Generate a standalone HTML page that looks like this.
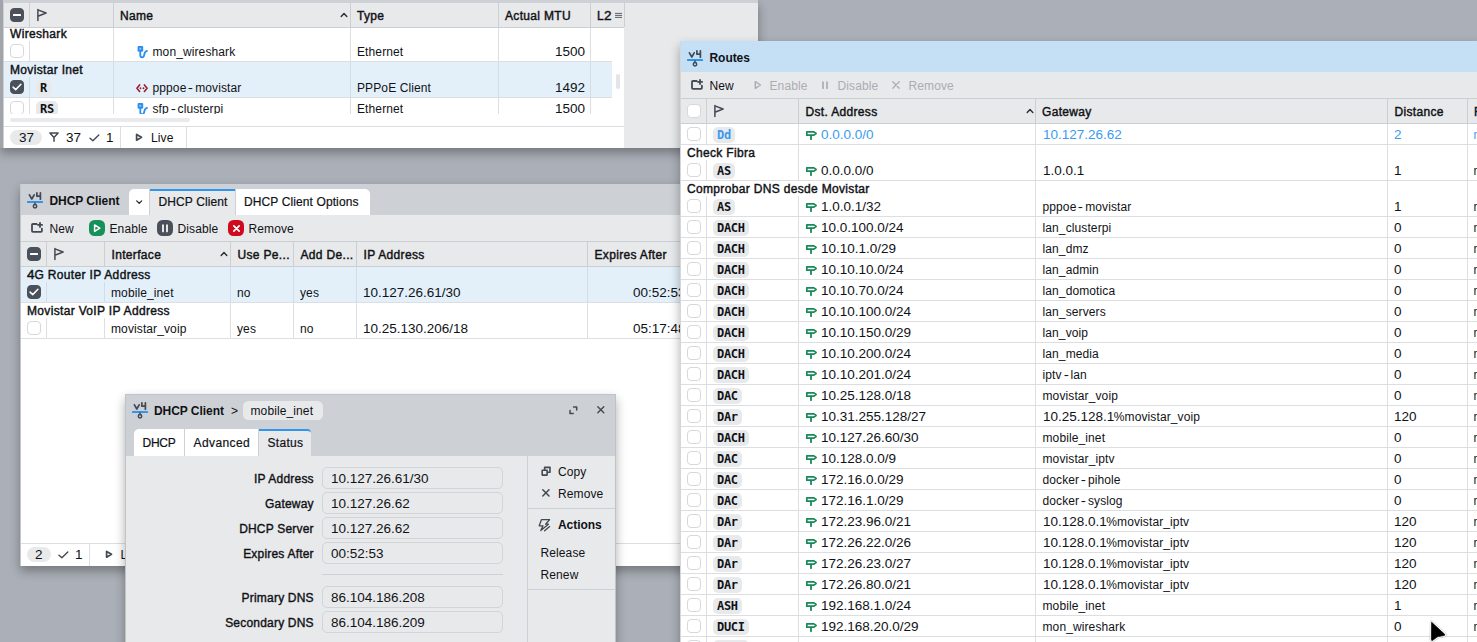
<!DOCTYPE html>
<html lang="en"><head><meta charset="utf-8"><title>WinBox</title><style>
*{box-sizing:border-box;margin:0;padding:0}
html,body{width:1477px;height:642px;overflow:hidden}
body{background:#abafb7;font-family:"Liberation Sans", sans-serif;font-size:12px;color:#101216;position:relative;line-height:14px;letter-spacing:.11px}
.a,.t,.win,.cb,.pill{position:absolute}
.t{white-space:nowrap;line-height:14px;height:14px}
.b{-webkit-text-stroke:.42px currentColor;letter-spacing:.33px}
.m{-webkit-text-stroke:.2px currentColor}
.B{font-weight:bold;letter-spacing:-.05px}
.n{display:inline-block;transform:scaleX(1.125);transform-origin:0 50%;letter-spacing:0}
.h{display:inline-block;width:8.75px;text-align:center;transform:scaleX(1.3)}
.win{overflow:hidden}
.cb{width:14px;height:14px;border-radius:4px;border:1px solid #d6d8dc;background:#fff}
.cb.on{background:#4a515b;border-color:#4a515b}
.pill{background:#e8e9eb;border-radius:5px;font-family:"DejaVu Sans Mono", "Liberation Mono", monospace;font-weight:bold;font-size:12px;line-height:16px;height:16px;padding:0 4px;white-space:nowrap;letter-spacing:-.3px}
.blue{color:#3a9bf0}
.dis{color:#a9adb4}
svg{position:absolute;overflow:visible}
</style></head><body>
<div class="a" style="left:0px;top:0px;width:758px;height:148px;background:#e8e9eb;box-shadow:0 5px 10px rgba(0,0,0,.32)"></div>
<div class="a" style="left:0px;top:0px;width:758px;height:3px;background:#cdd0d4;"></div>
<div class="a" style="left:0px;top:0px;width:3px;height:148px;background:#a1a5aa;"></div>
<div class="a" style="left:3px;top:0px;width:1px;height:148px;background:#cdd0d4;"></div>
<div class="a" style="left:4px;top:3px;width:620px;height:145px;background:#fff;"></div>
<div class="a" style="left:4px;top:3px;width:620px;height:24px;background:#e8e9eb;"></div>
<div class="a" style="left:4px;top:27px;width:620px;height:1px;background:#cbced2;"></div>
<div class="a" style="left:29px;top:3px;width:1px;height:24px;background:#cbced2;"></div>
<div class="a" style="left:113px;top:3px;width:1px;height:24px;background:#cbced2;"></div>
<div class="a" style="left:350px;top:3px;width:1px;height:24px;background:#cbced2;"></div>
<div class="a" style="left:498px;top:3px;width:1px;height:24px;background:#cbced2;"></div>
<div class="a" style="left:590px;top:3px;width:1px;height:24px;background:#cbced2;"></div>
<div class="cb on" style="left:10px;top:8px"><div class="a" style="left:2px;top:5px;width:8px;height:2px;background:#fff;border-radius:.5px"></div></div>
<svg style="left:36px;top:9px" width="12" height="12" viewBox="0 0 12 12"><path d="M1.9 0.6 V11.6 M1.9 0.9 L10.1 4 L1.9 7.2" fill="none" stroke="#434a54" stroke-width="1.5" stroke-linecap="round" stroke-linejoin="round"/></svg>
<div class="t b" style="left:120px;top:9px;">Name</div>
<svg style="left:340px;top:12px" width="8" height="6" viewBox="0 0 8 6"><path d="M1.2 4.5 L4 1.6 L6.8 4.5" fill="none" stroke="#2a2d33" stroke-width="1.4" stroke-linecap="round" stroke-linejoin="round"/></svg>
<div class="t b" style="left:357px;top:9px;">Type</div>
<div class="t b" style="left:505px;top:9px;">Actual MTU</div>
<div class="t b" style="left:597px;top:9px;">L<span class="n" style="margin-right:0.83px">2</span></div>
<svg style="left:614.5px;top:11px" width="8" height="9" viewBox="0 0 8 9"><path d="M0 2.4 H7 M0 4.4 H7 M0 6.4 H7" stroke="#5a5e66" stroke-width="1"/></svg>
<div class="a" style="left:624px;top:3px;width:1px;height:24px;background:#cbced2;"></div>
<div class="a" style="left:113px;top:28px;width:1px;height:86px;background:#dcdee1;"></div>
<div class="a" style="left:350px;top:28px;width:1px;height:86px;background:#dcdee1;"></div>
<div class="a" style="left:498px;top:28px;width:1px;height:86px;background:#dcdee1;"></div>
<div class="a" style="left:590px;top:28px;width:1px;height:86px;background:#dcdee1;"></div>
<div class="t b" style="left:10px;top:27px;">Wireshark</div>
<div class="cb" style="left:10px;top:44px"></div>
<div class="a" style="left:29px;top:41px;width:1px;height:20px;background:#dcdee1;"></div>
<svg style="left:137px;top:45px" width="11" height="13" viewBox="0 0 11 13"><rect x="0.6" y="0.9" width="5.6" height="5.9" rx="1.2" fill="#2a8ff0"/><rect x="2.4" y="2.9" width="1.8" height="1.7" fill="#9ccaf8"/><path d="M3.3 6.8 V10.3 Q3.3 12.3 5.1 12.3 Q7 12.3 7.2 10 Q7.5 6.6 10 5.9" fill="none" stroke="#2a8ff0" stroke-width="1.8" stroke-linecap="round" stroke-linejoin="round"/></svg>
<div class="t " style="left:152.5px;top:45px;">mon_wireshark</div>
<div class="t " style="left:357px;top:45px;">Ethernet</div>
<div class="t " style="left:505px;top:45px;width:80px;text-align:right"><span class="n" style="margin-right:3.34px">1500</span></div>
<div class="a" style="left:4px;top:61px;width:608px;height:1px;background:#dcdee1;"></div>
<div class="a" style="left:4px;top:62px;width:608px;height:35px;background:#e3f0fa;"></div>
<div class="a" style="left:113px;top:62px;width:1px;height:35px;background:#d2dde7;"></div>
<div class="a" style="left:350px;top:62px;width:1px;height:35px;background:#d2dde7;"></div>
<div class="a" style="left:498px;top:62px;width:1px;height:35px;background:#d2dde7;"></div>
<div class="a" style="left:590px;top:62px;width:1px;height:35px;background:#d2dde7;"></div>
<div class="t b" style="left:10px;top:63px;">Movistar Inet</div>
<div class="cb on" style="left:10px;top:80px"><svg width="12" height="12" viewBox="0 0 12 12" style="left:0;top:0"><path d="M2.1 6.1 L4.7 8.6 L9.9 3.3" fill="none" stroke="#fff" stroke-width="1.5" stroke-linecap="round" stroke-linejoin="round"/></svg></div>
<div class="a" style="left:29px;top:77px;width:1px;height:20px;background:#d2dde7;"></div>
<div class="pill " style="left:36px;top:80px">R</div>
<svg style="left:136px;top:83.5px" width="12" height="9" viewBox="0 0 12 9"><path d="M3.6 0.9 L0.9 4.2 L3.6 7.5 M8.4 0.9 L11.1 4.2 L8.4 7.5" fill="none" stroke="#9b1c2c" stroke-width="1.6" stroke-linecap="round" stroke-linejoin="round"/><circle cx="4.5" cy="4.2" r=".95" fill="#9b1c2c"/><circle cx="7.5" cy="4.2" r=".95" fill="#9b1c2c"/></svg>
<div class="t " style="left:152.5px;top:81px;">pppoe<span class="h">-</span>movistar</div>
<div class="t " style="left:357px;top:81px;">PPPoE Client</div>
<div class="t " style="left:505px;top:81px;width:80px;text-align:right"><span class="n" style="margin-right:3.34px">1492</span></div>
<div class="a" style="left:4px;top:97px;width:608px;height:1px;background:#dcdee1;"></div>
<div class="cb" style="left:10px;top:101px"></div>
<div class="a" style="left:29px;top:98px;width:1px;height:16px;background:#dcdee1;"></div>
<div class="pill " style="left:36px;top:101px">RS</div>
<svg style="left:137px;top:102px" width="11" height="13" viewBox="0 0 11 13"><rect x="0.6" y="0.9" width="5.6" height="5.9" rx="1.2" fill="#2a8ff0"/><rect x="2.4" y="2.9" width="1.8" height="1.7" fill="#9ccaf8"/><path d="M3.3 6.8 V10.3 Q3.3 12.3 5.1 12.3 Q7 12.3 7.2 10 Q7.5 6.6 10 5.9" fill="none" stroke="#2a8ff0" stroke-width="1.8" stroke-linecap="round" stroke-linejoin="round"/></svg>
<div class="t " style="left:152.5px;top:102px;">sfp<span class="h">-</span>clusterpi</div>
<div class="t " style="left:357px;top:102px;">Ethernet</div>
<div class="t " style="left:505px;top:102px;width:80px;text-align:right"><span class="n" style="margin-right:3.34px">1500</span></div>
<div class="a" style="left:4px;top:114px;width:620px;height:12px;background:#fff;"></div>
<div class="a" style="left:616px;top:74px;width:4px;height:15px;background:#e4e5e8;border-radius:2px"></div>
<div class="a" style="left:10px;top:118px;width:180px;height:4px;background:#e9eaec;border-radius:2px"></div>
<div class="a" style="left:4px;top:126px;width:620px;height:1px;background:#dcdee1;"></div>
<div class="a" style="left:10px;top:130px;width:32px;height:15px;background:#e8e9eb;border-radius:7.5px"></div>
<div class="t " style="left:19px;top:131px;"><span class="n" style="margin-right:1.67px">37</span></div>
<svg style="left:49px;top:132px" width="10" height="11" viewBox="0 0 10 11"><path d="M0.9 1.1 H9.1 L5 5.5 Z M5 5.5 V9.3" fill="none" stroke="#434a54" stroke-width="1.5" stroke-linecap="round" stroke-linejoin="round"/></svg>
<div class="t " style="left:66px;top:131px;"><span class="n" style="margin-right:1.67px">37</span></div>
<svg style="left:89px;top:134px" width="11" height="8" viewBox="0 0 11 8"><path d="M1 4.2 L3.9 6.8 L9.8 1" fill="none" stroke="#434a54" stroke-width="1.4" stroke-linecap="round" stroke-linejoin="round"/></svg>
<div class="t " style="left:106px;top:131px;"><span class="n" style="margin-right:0.83px">1</span></div>
<div class="a" style="left:120px;top:127px;width:1px;height:21px;background:#dcdee1;"></div>
<svg style="left:135px;top:133.2px" width="8" height="9" viewBox="0 0 8 9"><path d="M1.6 1.4 L6.5 4.3 L1.6 7.2 Z" fill="none" stroke="#434a54" stroke-width="1.7" stroke-linecap="round" stroke-linejoin="round"/></svg>
<div class="t " style="left:151px;top:131px;">Live</div>
<div class="a" style="left:186px;top:127px;width:1px;height:21px;background:#dcdee1;"></div>
<div class="win" style="left:20px;top:184px;width:700px;height:382px;background:#fff;box-shadow:0 5px 10px rgba(0,0,0,.32);border-left:1px solid #c2c5ca">
<div class="a" style="left:0px;top:0px;width:700px;height:31px;background:#cdd0d4;"></div>
<svg style="left:6px;top:8px" width="16" height="17" viewBox="0 0 16 17"><path d="M2.4 2.8 L4.8 7 L7.2 2.8" fill="none" stroke="#434a54" stroke-width="1.7" stroke-linecap="round" stroke-linejoin="round"/><path d="M9.9 0.8 V4.2 H13.2 M13.4 0.8 V7.2" fill="none" stroke="#434a54" stroke-width="1.7" stroke-linecap="round" stroke-linejoin="round"/><rect x="0" y="9" width="16" height="2" rx=".6" fill="#2f95ef"/><path d="M8 11 V12.6" fill="none" stroke="#434a54" stroke-width="1.5" stroke-linecap="round" stroke-linejoin="round"/><circle cx="8" cy="14.3" r="1.7" fill="none" stroke="#434a54" stroke-width="1.5"/></svg>
<div class="t B" style="left:28.5px;top:10px;">DHCP Client</div>
<div class="a" style="left:108px;top:5px;width:20px;height:26px;background:#fff;border-radius:5px 0 0 0"></div>
<svg style="left:114px;top:15px" width="8" height="6" viewBox="0 0 8 6"><path d="M1.7 1.9 L4.2 4.3 L6.7 1.9" fill="none" stroke="#2a2d33" stroke-width="1.3" stroke-linecap="round" stroke-linejoin="round"/></svg>
<div class="a" style="left:129px;top:5px;width:85px;height:26px;background:#e8e9eb;border-top:2px solid #2f95ef"></div>
<div class="t m" style="left:137.5px;top:11px;">DHCP Client</div>
<div class="a" style="left:215px;top:5px;width:134px;height:26px;background:#fff;border-radius:0 5px 0 0"></div>
<div class="t m" style="left:223px;top:11px;">DHCP Client Options</div>
<div class="a" style="left:0px;top:31px;width:700px;height:26px;background:#e8e9eb;"></div>
<svg style="left:9.5px;top:38px" width="13" height="12" viewBox="0 0 13 12"><path d="M5.6 2 H1.9 Q1 2 1 2.9 V9 Q1 9.9 1.9 9.9 H10 Q10.9 9.9 10.9 9 V6.6" fill="none" stroke="#434a54" stroke-width="1.8" stroke-linecap="round" stroke-linejoin="round"/><path d="M9 0.8 V5 M6.9 2.9 H11.1" fill="none" stroke="#434a54" stroke-width="1.8" stroke-linecap="round" stroke-linejoin="round"/></svg>
<div class="t " style="left:28.5px;top:38px;">New</div>
<div class="a" style="left:68px;top:36px;width:16px;height:16px;background:#17905a;border-radius:5.5px"></div>
<svg style="left:72px;top:39px" width="8" height="10" viewBox="0 0 8 10"><path d="M1.6 2 L6.8 5.2 L1.6 8.4 Z" fill="none" stroke="#fff" stroke-width="1.5" stroke-linecap="round" stroke-linejoin="round"/></svg>
<div class="t " style="left:88.5px;top:38px;">Enable</div>
<div class="a" style="left:136px;top:36px;width:16px;height:16px;background:#4a515b;border-radius:5.5px"></div>
<svg style="left:140px;top:39px" width="8" height="10" viewBox="0 0 8 10"><path d="M2 2 V8.4 M6 2 V8.4" fill="none" stroke="#fff" stroke-width="1.7" stroke-linecap="round" stroke-linejoin="round"/></svg>
<div class="t " style="left:156.5px;top:38px;">Disable</div>
<div class="a" style="left:207px;top:36px;width:16px;height:16px;background:#d00a1e;border-radius:5.5px"></div>
<svg style="left:211.5px;top:40.5px" width="7" height="7" viewBox="0 0 7 7"><path d="M0.8 0.8 L6.2 6.2 M6.2 0.8 L0.8 6.2" fill="none" stroke="#fff" stroke-width="1.7" stroke-linecap="round" stroke-linejoin="round"/></svg>
<div class="t " style="left:227.5px;top:38px;">Remove</div>
<div class="a" style="left:0px;top:57px;width:700px;height:1px;background:#cbced2;"></div>
<div class="a" style="left:0px;top:58px;width:700px;height:24px;background:#e8e9eb;"></div>
<div class="a" style="left:0px;top:82px;width:700px;height:1px;background:#cbced2;"></div>
<div class="a" style="left:25px;top:58px;width:1px;height:24px;background:#cbced2;"></div>
<div class="a" style="left:83px;top:58px;width:1px;height:24px;background:#cbced2;"></div>
<div class="a" style="left:209px;top:58px;width:1px;height:24px;background:#cbced2;"></div>
<div class="a" style="left:272px;top:58px;width:1px;height:24px;background:#cbced2;"></div>
<div class="a" style="left:335px;top:58px;width:1px;height:24px;background:#cbced2;"></div>
<div class="a" style="left:566px;top:58px;width:1px;height:24px;background:#cbced2;"></div>
<div class="cb on" style="left:6px;top:63px"><div class="a" style="left:2px;top:5px;width:8px;height:2px;background:#fff;border-radius:.5px"></div></div>
<svg style="left:32px;top:64px" width="12" height="12" viewBox="0 0 12 12"><path d="M1.9 0.6 V11.6 M1.9 0.9 L10.1 4 L1.9 7.2" fill="none" stroke="#434a54" stroke-width="1.5" stroke-linecap="round" stroke-linejoin="round"/></svg>
<div class="t b" style="left:90.5px;top:64px;">Interface</div>
<svg style="left:199px;top:67px" width="8" height="6" viewBox="0 0 8 6"><path d="M1.2 4.5 L4 1.6 L6.8 4.5" fill="none" stroke="#2a2d33" stroke-width="1.4" stroke-linecap="round" stroke-linejoin="round"/></svg>
<div class="t b" style="left:216.5px;top:64px;">Use Pe...</div>
<div class="t b" style="left:279.5px;top:64px;">Add De...</div>
<div class="t b" style="left:342.5px;top:64px;">IP Address</div>
<div class="t b" style="left:573.5px;top:64px;">Expires After</div>
<div class="a" style="left:0px;top:83px;width:700px;height:35px;background:#e3f0fa;"></div>
<div class="a" style="left:0px;top:118px;width:700px;height:1px;background:#dcdee1;"></div>
<div class="a" style="left:0px;top:154px;width:700px;height:1px;background:#dcdee1;"></div>
<div class="a" style="left:209px;top:83px;width:1px;height:35px;background:#d2dde7;"></div>
<div class="a" style="left:209px;top:119px;width:1px;height:35px;background:#dcdee1;"></div>
<div class="a" style="left:272px;top:83px;width:1px;height:35px;background:#d2dde7;"></div>
<div class="a" style="left:272px;top:119px;width:1px;height:35px;background:#dcdee1;"></div>
<div class="a" style="left:335px;top:83px;width:1px;height:35px;background:#d2dde7;"></div>
<div class="a" style="left:335px;top:119px;width:1px;height:35px;background:#dcdee1;"></div>
<div class="a" style="left:566px;top:83px;width:1px;height:35px;background:#d2dde7;"></div>
<div class="a" style="left:566px;top:119px;width:1px;height:35px;background:#dcdee1;"></div>
<div class="a" style="left:25px;top:98px;width:1px;height:20px;background:#d2dde7;"></div>
<div class="a" style="left:25px;top:134px;width:1px;height:20px;background:#dcdee1;"></div>
<div class="a" style="left:83px;top:98px;width:1px;height:20px;background:#d2dde7;"></div>
<div class="a" style="left:83px;top:134px;width:1px;height:20px;background:#dcdee1;"></div>
<div class="t b" style="left:6px;top:84px;"><span class="n" style="margin-right:0.83px">4</span>G Router IP Address</div>
<div class="cb on" style="left:6px;top:101px"><svg width="12" height="12" viewBox="0 0 12 12" style="left:0;top:0"><path d="M2.1 6.1 L4.7 8.6 L9.9 3.3" fill="none" stroke="#fff" stroke-width="1.5" stroke-linecap="round" stroke-linejoin="round"/></svg></div>
<div class="t " style="left:90px;top:102px;">mobile_inet</div>
<div class="t " style="left:216px;top:102px;">no</div>
<div class="t " style="left:279px;top:102px;">yes</div>
<div class="t " style="left:342px;top:102px;"><span class="n" style="margin-right:10.84px">10.127.26.61/30</span></div>
<div class="t " style="left:612px;top:102px;"><span class="n" style="margin-right:5.84px">00:52:53</span></div>
<div class="t b" style="left:6px;top:120px;">Movistar VoIP IP Address</div>
<div class="cb" style="left:6px;top:137px"></div>
<div class="t " style="left:90px;top:138px;">movistar_voip</div>
<div class="t " style="left:216px;top:138px;">yes</div>
<div class="t " style="left:279px;top:138px;">no</div>
<div class="t " style="left:342px;top:138px;"><span class="n" style="margin-right:11.68px">10.25.130.206/18</span></div>
<div class="t " style="left:612px;top:138px;"><span class="n" style="margin-right:5.84px">05:17:48</span></div>
<div class="a" style="left:0px;top:359px;width:700px;height:1px;background:#dcdee1;"></div>
<div class="a" style="left:6px;top:363px;width:24px;height:14.5px;background:#e8e9eb;border-radius:7.5px"></div>
<div class="t " style="left:14px;top:364px;"><span class="n" style="margin-right:0.83px">2</span></div>
<svg style="left:36.5px;top:366.5px" width="11" height="8" viewBox="0 0 11 8"><path d="M1 4.2 L3.9 6.8 L9.8 1" fill="none" stroke="#434a54" stroke-width="1.4" stroke-linecap="round" stroke-linejoin="round"/></svg>
<div class="t " style="left:54px;top:364px;"><span class="n" style="margin-right:0.83px">1</span></div>
<div class="a" style="left:68px;top:360px;width:1px;height:22px;background:#dcdee1;"></div>
<svg style="left:83.5px;top:366px" width="8" height="9" viewBox="0 0 8 9"><path d="M1.6 1.4 L6.5 4.3 L1.6 7.2 Z" fill="none" stroke="#434a54" stroke-width="1.7" stroke-linecap="round" stroke-linejoin="round"/></svg>
<div class="t " style="left:99.5px;top:364px;">Live</div>
</div>
<div class="win" style="left:125px;top:394px;width:491px;height:260px;background:#e8e9eb;box-shadow:0 5px 10px rgba(0,0,0,.32);border:1px solid #bfc3c8">
<div class="a" style="left:-1px;top:-1px;width:492px;height:62px;background:#cdd0d4;"></div>
<svg style="left:6px;top:7px" width="16" height="17" viewBox="0 0 16 17"><path d="M2.4 2.8 L4.8 7 L7.2 2.8" fill="none" stroke="#434a54" stroke-width="1.7" stroke-linecap="round" stroke-linejoin="round"/><path d="M9.9 0.8 V4.2 H13.2 M13.4 0.8 V7.2" fill="none" stroke="#434a54" stroke-width="1.7" stroke-linecap="round" stroke-linejoin="round"/><rect x="0" y="9" width="16" height="2" rx=".6" fill="#2f95ef"/><path d="M8 11 V12.6" fill="none" stroke="#434a54" stroke-width="1.5" stroke-linecap="round" stroke-linejoin="round"/><circle cx="8" cy="14.3" r="1.7" fill="none" stroke="#434a54" stroke-width="1.5"/></svg>
<div class="t B" style="left:28px;top:9px;">DHCP Client</div>
<div class="t " style="left:105px;top:9px;">&gt;</div>
<div class="a" style="left:116.5px;top:6px;width:80.5px;height:19px;background:#e8e9eb;border-radius:5.5px"></div>
<div class="t " style="left:124.5px;top:9px;">mobile_inet</div>
<svg style="left:443px;top:11px" width="9" height="9" viewBox="0 0 9 9"><path d="M4.6 0.9 H7.7 V4" fill="none" stroke="#434a54" stroke-width="1.5" stroke-linecap="round" stroke-linejoin="round"/><path d="M1 4.6 V7.6 H4.2" fill="none" stroke="#434a54" stroke-width="1.5" stroke-linecap="round" stroke-linejoin="round"/></svg>
<svg style="left:470.5px;top:11.3px" width="7.6" height="7.6" viewBox="0 0 7.6 7.6"><path d="M0.8 0.8 L6.8 6.8 M6.8 0.8 L0.8 6.8" fill="none" stroke="#434a54" stroke-width="1.4" stroke-linecap="round" stroke-linejoin="round"/></svg>
<div class="a" style="left:8px;top:34px;width:50px;height:27px;background:#fff;border-radius:5px 0 0 0"></div>
<div class="t m" style="left:16.5px;top:41px;letter-spacing:-.25px">DHCP</div>
<div class="a" style="left:59px;top:34px;width:73px;height:27px;background:#fff;"></div>
<div class="t m" style="left:67.5px;top:41px;letter-spacing:.4px">Advanced</div>
<div class="a" style="left:132.5px;top:34px;width:52.5px;height:27px;background:#e8e9eb;border-top:2px solid #2f95ef;border-radius:0 4px 0 0"></div>
<div class="t m" style="left:141.5px;top:41px;letter-spacing:.3px">Status</div>
<div class="t b" style="left:7px;top:77px;width:180.8px;text-align:right;letter-spacing:.2px;-webkit-text-stroke-width:.38px">IP Address</div>
<div class="a" style="left:196px;top:72px;width:181px;height:22px;border:1px solid #d2d4d8;border-radius:5px"></div>
<div class="t " style="left:204.5px;top:77px;"><span class="n" style="margin-right:10.84px">10.127.26.61/30</span></div>
<div class="t b" style="left:7px;top:102px;width:180.8px;text-align:right;letter-spacing:.2px;-webkit-text-stroke-width:.38px">Gateway</div>
<div class="a" style="left:196px;top:97px;width:181px;height:22px;border:1px solid #d2d4d8;border-radius:5px"></div>
<div class="t " style="left:204.5px;top:102px;"><span class="n" style="margin-right:8.76px">10.127.26.62</span></div>
<div class="t b" style="left:7px;top:127px;width:180.8px;text-align:right;letter-spacing:.2px;-webkit-text-stroke-width:.38px">DHCP Server</div>
<div class="a" style="left:196px;top:122px;width:181px;height:22px;border:1px solid #d2d4d8;border-radius:5px"></div>
<div class="t " style="left:204.5px;top:127px;"><span class="n" style="margin-right:8.76px">10.127.26.62</span></div>
<div class="t b" style="left:7px;top:152px;width:180.8px;text-align:right;letter-spacing:.2px;-webkit-text-stroke-width:.38px">Expires After</div>
<div class="a" style="left:196px;top:147px;width:181px;height:22px;border:1px solid #d2d4d8;border-radius:5px"></div>
<div class="t " style="left:204.5px;top:152px;"><span class="n" style="margin-right:5.84px">00:52:53</span></div>
<div class="a" style="left:196px;top:179px;width:181px;height:1px;background:#cdd0d4;"></div>
<div class="t b" style="left:7px;top:196px;width:180.8px;text-align:right;letter-spacing:.2px;-webkit-text-stroke-width:.38px">Primary DNS</div>
<div class="a" style="left:196px;top:191px;width:181px;height:22px;border:1px solid #d2d4d8;border-radius:5px"></div>
<div class="t " style="left:204.5px;top:196px;"><span class="n" style="margin-right:10.43px">86.104.186.208</span></div>
<div class="t b" style="left:7px;top:221px;width:180.8px;text-align:right;letter-spacing:.2px;-webkit-text-stroke-width:.38px">Secondary DNS</div>
<div class="a" style="left:196px;top:216px;width:181px;height:22px;border:1px solid #d2d4d8;border-radius:5px"></div>
<div class="t " style="left:204.5px;top:221px;"><span class="n" style="margin-right:10.43px">86.104.186.209</span></div>
<div class="a" style="left:401px;top:61px;width:1px;height:200px;background:#cdd0d4;"></div>
<svg style="left:415px;top:71px" width="11" height="11" viewBox="0 0 11 11"><path d="M3.6 1.4 H9 V6.3 H3.6 Z" fill="none" stroke="#434a54" stroke-width="1.6" stroke-linecap="round" stroke-linejoin="round"/><path d="M1.2 4.3 H6.1 V9.1 H1.2 Z" fill="#e8e9eb" stroke="#434a54" stroke-width="1.6" stroke-linecap="round" stroke-linejoin="round"/></svg>
<div class="t " style="left:432px;top:70px;">Copy</div>
<svg style="left:416px;top:94.2px" width="7.8" height="7.8" viewBox="0 0 7.8 7.8"><path d="M0.8 0.8 L7.0 7.0 M7.0 0.8 L0.8 7.0" fill="none" stroke="#434a54" stroke-width="1.5" stroke-linecap="round" stroke-linejoin="round"/></svg>
<div class="t " style="left:432px;top:92px;">Remove</div>
<div class="a" style="left:402px;top:113px;width:88px;height:1px;background:#cdd0d4;"></div>
<svg style="left:412px;top:123px" width="13" height="14" viewBox="0 0 13 14"><path d="M3.5 1.6 H11.6 L7.6 6.2 H10.4 L2.8 12.6 L5 7.8 H1.2 Z" fill="none" stroke="#434a54" stroke-width="1.3" stroke-linecap="round" stroke-linejoin="round"/><path d="M11.6 8.6 L6.6 12.8" fill="none" stroke="#434a54" stroke-width="1.3" stroke-linecap="round" stroke-linejoin="round"/></svg>
<div class="t B" style="left:432px;top:123px;">Actions</div>
<div class="t " style="left:414.5px;top:151px;">Release</div>
<div class="t " style="left:414.5px;top:173px;">Renew</div>
<div class="a" style="left:402px;top:194px;width:88px;height:1px;background:#cdd0d4;"></div>
</div>
<div class="win" style="left:680px;top:41px;width:800px;height:620px;background:#fff;box-shadow:0 5px 10px rgba(0,0,0,.32);border-left:1px solid #d4d6da">
<div class="a" style="left:-1px;top:0px;width:800px;height:31px;background:#c5dff4;"></div>
<svg style="left:6px;top:9px" width="16" height="17" viewBox="0 0 16 17"><path d="M2.4 2.8 L4.8 7 L7.2 2.8" fill="none" stroke="#434a54" stroke-width="1.7" stroke-linecap="round" stroke-linejoin="round"/><path d="M9.9 0.8 V4.2 H13.2 M13.4 0.8 V7.2" fill="none" stroke="#434a54" stroke-width="1.7" stroke-linecap="round" stroke-linejoin="round"/><rect x="0" y="9" width="16" height="2" rx=".6" fill="#2f95ef"/><path d="M8 11 V12.6" fill="none" stroke="#434a54" stroke-width="1.5" stroke-linecap="round" stroke-linejoin="round"/><circle cx="8" cy="14.3" r="1.7" fill="none" stroke="#434a54" stroke-width="1.5"/></svg>
<div class="t B" style="left:28.5px;top:10px;">Routes</div>
<div class="a" style="left:-1px;top:31px;width:800px;height:26px;background:#e8e9eb;"></div>
<svg style="left:10px;top:38px" width="13" height="12" viewBox="0 0 13 12"><path d="M5.6 2 H1.9 Q1 2 1 2.9 V9 Q1 9.9 1.9 9.9 H10 Q10.9 9.9 10.9 9 V6.6" fill="none" stroke="#434a54" stroke-width="1.8" stroke-linecap="round" stroke-linejoin="round"/><path d="M9 0.8 V5 M6.9 2.9 H11.1" fill="none" stroke="#434a54" stroke-width="1.8" stroke-linecap="round" stroke-linejoin="round"/></svg>
<div class="t " style="left:28.5px;top:38px;">New</div>
<svg style="left:73px;top:39px" width="8" height="10" viewBox="0 0 8 10"><path d="M1.3 1.6 L6.5 5 L1.3 8.4 Z" fill="none" stroke="#a9adb4" stroke-width="1.45" stroke-linecap="round" stroke-linejoin="round"/></svg>
<div class="t dis" style="left:88.5px;top:38px;">Enable</div>
<svg style="left:140px;top:39px" width="8" height="10" viewBox="0 0 8 10"><path d="M2 2 V8.2 M6 2 V8.2" fill="none" stroke="#a9adb4" stroke-width="1.7" stroke-linecap="round" stroke-linejoin="round"/></svg>
<div class="t dis" style="left:156.5px;top:38px;">Disable</div>
<svg style="left:211px;top:40px" width="8" height="8" viewBox="0 0 8 8"><path d="M0.8 0.8 L7.2 7.2 M7.2 0.8 L0.8 7.2" fill="none" stroke="#a9adb4" stroke-width="1.3" stroke-linecap="round" stroke-linejoin="round"/></svg>
<div class="t dis" style="left:227.5px;top:38px;">Remove</div>
<div class="a" style="left:-1px;top:57px;width:800px;height:1px;background:#cbced2;"></div>
<div class="a" style="left:-1px;top:58px;width:800px;height:24px;background:#e8e9eb;"></div>
<div class="a" style="left:-1px;top:82px;width:800px;height:1px;background:#cbced2;"></div>
<div class="a" style="left:25px;top:58px;width:1px;height:24px;background:#cbced2;"></div>
<div class="a" style="left:117px;top:58px;width:1px;height:24px;background:#cbced2;"></div>
<div class="a" style="left:354px;top:58px;width:1px;height:24px;background:#cbced2;"></div>
<div class="a" style="left:706px;top:58px;width:1px;height:24px;background:#cbced2;"></div>
<div class="a" style="left:786px;top:58px;width:1px;height:24px;background:#cbced2;"></div>
<div class="cb" style="left:6px;top:63px"></div>
<svg style="left:31.5px;top:64px" width="12" height="12" viewBox="0 0 12 12"><path d="M1.9 0.6 V11.6 M1.9 0.9 L10.1 4 L1.9 7.2" fill="none" stroke="#434a54" stroke-width="1.5" stroke-linecap="round" stroke-linejoin="round"/></svg>
<div class="t b" style="left:124.5px;top:64px;">Dst. Address</div>
<svg style="left:345px;top:67px" width="8" height="6" viewBox="0 0 8 6"><path d="M1.2 4.5 L4 1.6 L6.8 4.5" fill="none" stroke="#2a2d33" stroke-width="1.4" stroke-linecap="round" stroke-linejoin="round"/></svg>
<div class="t b" style="left:361px;top:64px;">Gateway</div>
<div class="t b" style="left:713.5px;top:64px;">Distance</div>
<div class="t b" style="left:793px;top:64px;">R</div>
<div class="cb" style="left:6px;top:86px"></div>
<div class="a" style="left:25px;top:83px;width:1px;height:20px;background:#dcdee1;"></div>
<div class="a" style="left:117px;top:83px;width:1px;height:20px;background:#dcdee1;"></div>
<div class="a" style="left:354px;top:83px;width:1px;height:20px;background:#dcdee1;"></div>
<div class="a" style="left:706px;top:83px;width:1px;height:20px;background:#dcdee1;"></div>
<div class="a" style="left:786px;top:83px;width:1px;height:20px;background:#dcdee1;"></div>
<div class="pill blue" style="left:32px;top:86px">Dd</div>
<svg style="left:124px;top:89px" width="13" height="11" viewBox="0 0 13 11"><path d="M1.8 1.8 H8.9 L11.1 3.5 L8.9 5.2 H1.8 Z" fill="none" stroke="#17895a" stroke-width="1.7" stroke-linecap="round" stroke-linejoin="round"/><path d="M6 5.6 V9.2" fill="none" stroke="#17895a" stroke-width="1.8" stroke-linecap="round" stroke-linejoin="round"/></svg>
<div class="t blue" style="left:139.5px;top:87px;"><span class="n" style="margin-right:5.84px">0.0.0.0/0</span></div>
<div class="t blue" style="left:361.5px;top:87px;"><span class="n" style="margin-right:8.76px">10.127.26.62</span></div>
<div class="t blue" style="left:713px;top:87px;"><span class="n" style="margin-right:0.83px">2</span></div>
<div class="t blue" style="left:792.5px;top:87px;">main</div>
<div class="a" style="left:-1px;top:103px;width:800px;height:1px;background:#dcdee1;"></div>
<div class="t b" style="left:6px;top:105px;">Check Fibra</div>
<div class="cb" style="left:6px;top:122px"></div>
<div class="a" style="left:25px;top:119px;width:1px;height:20px;background:#dcdee1;"></div>
<div class="a" style="left:117px;top:104px;width:1px;height:35px;background:#dcdee1;"></div>
<div class="a" style="left:354px;top:104px;width:1px;height:35px;background:#dcdee1;"></div>
<div class="a" style="left:706px;top:104px;width:1px;height:35px;background:#dcdee1;"></div>
<div class="a" style="left:786px;top:104px;width:1px;height:35px;background:#dcdee1;"></div>
<div class="pill " style="left:32px;top:122px">AS</div>
<svg style="left:124px;top:125px" width="13" height="11" viewBox="0 0 13 11"><path d="M1.8 1.8 H8.9 L11.1 3.5 L8.9 5.2 H1.8 Z" fill="none" stroke="#17895a" stroke-width="1.7" stroke-linecap="round" stroke-linejoin="round"/><path d="M6 5.6 V9.2" fill="none" stroke="#17895a" stroke-width="1.8" stroke-linecap="round" stroke-linejoin="round"/></svg>
<div class="t " style="left:139.5px;top:123px;"><span class="n" style="margin-right:5.84px">0.0.0.0/0</span></div>
<div class="t " style="left:361.5px;top:123px;"><span class="n" style="margin-right:4.59px">1.0.0.1</span></div>
<div class="t " style="left:713px;top:123px;"><span class="n" style="margin-right:0.83px">1</span></div>
<div class="t " style="left:792.5px;top:123px;">main</div>
<div class="a" style="left:-1px;top:139px;width:800px;height:1px;background:#dcdee1;"></div>
<div class="t b" style="left:6px;top:141px;">Comprobar DNS desde Movistar</div>
<div class="cb" style="left:6px;top:158px"></div>
<div class="a" style="left:25px;top:155px;width:1px;height:20px;background:#dcdee1;"></div>
<div class="a" style="left:117px;top:155px;width:1px;height:20px;background:#dcdee1;"></div>
<div class="a" style="left:354px;top:140px;width:1px;height:35px;background:#dcdee1;"></div>
<div class="a" style="left:706px;top:140px;width:1px;height:35px;background:#dcdee1;"></div>
<div class="a" style="left:786px;top:140px;width:1px;height:35px;background:#dcdee1;"></div>
<div class="pill " style="left:32px;top:158px">AS</div>
<svg style="left:124px;top:161px" width="13" height="11" viewBox="0 0 13 11"><path d="M1.8 1.8 H8.9 L11.1 3.5 L8.9 5.2 H1.8 Z" fill="none" stroke="#17895a" stroke-width="1.7" stroke-linecap="round" stroke-linejoin="round"/><path d="M6 5.6 V9.2" fill="none" stroke="#17895a" stroke-width="1.8" stroke-linecap="round" stroke-linejoin="round"/></svg>
<div class="t " style="left:139.5px;top:159px;"><span class="n" style="margin-right:6.67px">1.0.0.1/32</span></div>
<div class="t " style="left:361.5px;top:159px;">pppoe<span class="h">-</span>movistar</div>
<div class="t " style="left:713px;top:159px;"><span class="n" style="margin-right:0.83px">1</span></div>
<div class="t " style="left:792.5px;top:159px;">main</div>
<div class="a" style="left:-1px;top:175px;width:800px;height:1px;background:#dcdee1;"></div>
<div class="cb" style="left:6px;top:179px"></div>
<div class="a" style="left:25px;top:176px;width:1px;height:20px;background:#dcdee1;"></div>
<div class="a" style="left:117px;top:176px;width:1px;height:20px;background:#dcdee1;"></div>
<div class="a" style="left:354px;top:176px;width:1px;height:20px;background:#dcdee1;"></div>
<div class="a" style="left:706px;top:176px;width:1px;height:20px;background:#dcdee1;"></div>
<div class="a" style="left:786px;top:176px;width:1px;height:20px;background:#dcdee1;"></div>
<div class="pill " style="left:32px;top:179px">DACH</div>
<svg style="left:124px;top:182px" width="13" height="11" viewBox="0 0 13 11"><path d="M1.8 1.8 H8.9 L11.1 3.5 L8.9 5.2 H1.8 Z" fill="none" stroke="#17895a" stroke-width="1.7" stroke-linecap="round" stroke-linejoin="round"/><path d="M6 5.6 V9.2" fill="none" stroke="#17895a" stroke-width="1.8" stroke-linecap="round" stroke-linejoin="round"/></svg>
<div class="t " style="left:139.5px;top:180px;"><span class="n" style="margin-right:9.18px">10.0.100.0/24</span></div>
<div class="t " style="left:361.5px;top:180px;">lan_clusterpi</div>
<div class="t " style="left:713px;top:180px;"><span class="n" style="margin-right:0.83px">0</span></div>
<div class="t " style="left:792.5px;top:180px;">main</div>
<div class="a" style="left:-1px;top:196px;width:800px;height:1px;background:#dcdee1;"></div>
<div class="cb" style="left:6px;top:200px"></div>
<div class="a" style="left:25px;top:197px;width:1px;height:20px;background:#dcdee1;"></div>
<div class="a" style="left:117px;top:197px;width:1px;height:20px;background:#dcdee1;"></div>
<div class="a" style="left:354px;top:197px;width:1px;height:20px;background:#dcdee1;"></div>
<div class="a" style="left:706px;top:197px;width:1px;height:20px;background:#dcdee1;"></div>
<div class="a" style="left:786px;top:197px;width:1px;height:20px;background:#dcdee1;"></div>
<div class="pill " style="left:32px;top:200px">DACH</div>
<svg style="left:124px;top:203px" width="13" height="11" viewBox="0 0 13 11"><path d="M1.8 1.8 H8.9 L11.1 3.5 L8.9 5.2 H1.8 Z" fill="none" stroke="#17895a" stroke-width="1.7" stroke-linecap="round" stroke-linejoin="round"/><path d="M6 5.6 V9.2" fill="none" stroke="#17895a" stroke-width="1.8" stroke-linecap="round" stroke-linejoin="round"/></svg>
<div class="t " style="left:139.5px;top:201px;"><span class="n" style="margin-right:8.34px">10.10.1.0/29</span></div>
<div class="t " style="left:361.5px;top:201px;">lan_dmz</div>
<div class="t " style="left:713px;top:201px;"><span class="n" style="margin-right:0.83px">0</span></div>
<div class="t " style="left:792.5px;top:201px;">main</div>
<div class="a" style="left:-1px;top:217px;width:800px;height:1px;background:#dcdee1;"></div>
<div class="cb" style="left:6px;top:221px"></div>
<div class="a" style="left:25px;top:218px;width:1px;height:20px;background:#dcdee1;"></div>
<div class="a" style="left:117px;top:218px;width:1px;height:20px;background:#dcdee1;"></div>
<div class="a" style="left:354px;top:218px;width:1px;height:20px;background:#dcdee1;"></div>
<div class="a" style="left:706px;top:218px;width:1px;height:20px;background:#dcdee1;"></div>
<div class="a" style="left:786px;top:218px;width:1px;height:20px;background:#dcdee1;"></div>
<div class="pill " style="left:32px;top:221px">DACH</div>
<svg style="left:124px;top:224px" width="13" height="11" viewBox="0 0 13 11"><path d="M1.8 1.8 H8.9 L11.1 3.5 L8.9 5.2 H1.8 Z" fill="none" stroke="#17895a" stroke-width="1.7" stroke-linecap="round" stroke-linejoin="round"/><path d="M6 5.6 V9.2" fill="none" stroke="#17895a" stroke-width="1.8" stroke-linecap="round" stroke-linejoin="round"/></svg>
<div class="t " style="left:139.5px;top:222px;"><span class="n" style="margin-right:9.18px">10.10.10.0/24</span></div>
<div class="t " style="left:361.5px;top:222px;">lan_admin</div>
<div class="t " style="left:713px;top:222px;"><span class="n" style="margin-right:0.83px">0</span></div>
<div class="t " style="left:792.5px;top:222px;">main</div>
<div class="a" style="left:-1px;top:238px;width:800px;height:1px;background:#dcdee1;"></div>
<div class="cb" style="left:6px;top:242px"></div>
<div class="a" style="left:25px;top:239px;width:1px;height:20px;background:#dcdee1;"></div>
<div class="a" style="left:117px;top:239px;width:1px;height:20px;background:#dcdee1;"></div>
<div class="a" style="left:354px;top:239px;width:1px;height:20px;background:#dcdee1;"></div>
<div class="a" style="left:706px;top:239px;width:1px;height:20px;background:#dcdee1;"></div>
<div class="a" style="left:786px;top:239px;width:1px;height:20px;background:#dcdee1;"></div>
<div class="pill " style="left:32px;top:242px">DACH</div>
<svg style="left:124px;top:245px" width="13" height="11" viewBox="0 0 13 11"><path d="M1.8 1.8 H8.9 L11.1 3.5 L8.9 5.2 H1.8 Z" fill="none" stroke="#17895a" stroke-width="1.7" stroke-linecap="round" stroke-linejoin="round"/><path d="M6 5.6 V9.2" fill="none" stroke="#17895a" stroke-width="1.8" stroke-linecap="round" stroke-linejoin="round"/></svg>
<div class="t " style="left:139.5px;top:243px;"><span class="n" style="margin-right:9.18px">10.10.70.0/24</span></div>
<div class="t " style="left:361.5px;top:243px;">lan_domotica</div>
<div class="t " style="left:713px;top:243px;"><span class="n" style="margin-right:0.83px">0</span></div>
<div class="t " style="left:792.5px;top:243px;">main</div>
<div class="a" style="left:-1px;top:259px;width:800px;height:1px;background:#dcdee1;"></div>
<div class="cb" style="left:6px;top:263px"></div>
<div class="a" style="left:25px;top:260px;width:1px;height:20px;background:#dcdee1;"></div>
<div class="a" style="left:117px;top:260px;width:1px;height:20px;background:#dcdee1;"></div>
<div class="a" style="left:354px;top:260px;width:1px;height:20px;background:#dcdee1;"></div>
<div class="a" style="left:706px;top:260px;width:1px;height:20px;background:#dcdee1;"></div>
<div class="a" style="left:786px;top:260px;width:1px;height:20px;background:#dcdee1;"></div>
<div class="pill " style="left:32px;top:263px">DACH</div>
<svg style="left:124px;top:266px" width="13" height="11" viewBox="0 0 13 11"><path d="M1.8 1.8 H8.9 L11.1 3.5 L8.9 5.2 H1.8 Z" fill="none" stroke="#17895a" stroke-width="1.7" stroke-linecap="round" stroke-linejoin="round"/><path d="M6 5.6 V9.2" fill="none" stroke="#17895a" stroke-width="1.8" stroke-linecap="round" stroke-linejoin="round"/></svg>
<div class="t " style="left:139.5px;top:264px;"><span class="n" style="margin-right:10.01px">10.10.100.0/24</span></div>
<div class="t " style="left:361.5px;top:264px;">lan_servers</div>
<div class="t " style="left:713px;top:264px;"><span class="n" style="margin-right:0.83px">0</span></div>
<div class="t " style="left:792.5px;top:264px;">main</div>
<div class="a" style="left:-1px;top:280px;width:800px;height:1px;background:#dcdee1;"></div>
<div class="cb" style="left:6px;top:284px"></div>
<div class="a" style="left:25px;top:281px;width:1px;height:20px;background:#dcdee1;"></div>
<div class="a" style="left:117px;top:281px;width:1px;height:20px;background:#dcdee1;"></div>
<div class="a" style="left:354px;top:281px;width:1px;height:20px;background:#dcdee1;"></div>
<div class="a" style="left:706px;top:281px;width:1px;height:20px;background:#dcdee1;"></div>
<div class="a" style="left:786px;top:281px;width:1px;height:20px;background:#dcdee1;"></div>
<div class="pill " style="left:32px;top:284px">DACH</div>
<svg style="left:124px;top:287px" width="13" height="11" viewBox="0 0 13 11"><path d="M1.8 1.8 H8.9 L11.1 3.5 L8.9 5.2 H1.8 Z" fill="none" stroke="#17895a" stroke-width="1.7" stroke-linecap="round" stroke-linejoin="round"/><path d="M6 5.6 V9.2" fill="none" stroke="#17895a" stroke-width="1.8" stroke-linecap="round" stroke-linejoin="round"/></svg>
<div class="t " style="left:139.5px;top:285px;"><span class="n" style="margin-right:10.01px">10.10.150.0/29</span></div>
<div class="t " style="left:361.5px;top:285px;">lan_voip</div>
<div class="t " style="left:713px;top:285px;"><span class="n" style="margin-right:0.83px">0</span></div>
<div class="t " style="left:792.5px;top:285px;">main</div>
<div class="a" style="left:-1px;top:301px;width:800px;height:1px;background:#dcdee1;"></div>
<div class="cb" style="left:6px;top:305px"></div>
<div class="a" style="left:25px;top:302px;width:1px;height:20px;background:#dcdee1;"></div>
<div class="a" style="left:117px;top:302px;width:1px;height:20px;background:#dcdee1;"></div>
<div class="a" style="left:354px;top:302px;width:1px;height:20px;background:#dcdee1;"></div>
<div class="a" style="left:706px;top:302px;width:1px;height:20px;background:#dcdee1;"></div>
<div class="a" style="left:786px;top:302px;width:1px;height:20px;background:#dcdee1;"></div>
<div class="pill " style="left:32px;top:305px">DACH</div>
<svg style="left:124px;top:308px" width="13" height="11" viewBox="0 0 13 11"><path d="M1.8 1.8 H8.9 L11.1 3.5 L8.9 5.2 H1.8 Z" fill="none" stroke="#17895a" stroke-width="1.7" stroke-linecap="round" stroke-linejoin="round"/><path d="M6 5.6 V9.2" fill="none" stroke="#17895a" stroke-width="1.8" stroke-linecap="round" stroke-linejoin="round"/></svg>
<div class="t " style="left:139.5px;top:306px;"><span class="n" style="margin-right:10.01px">10.10.200.0/24</span></div>
<div class="t " style="left:361.5px;top:306px;">lan_media</div>
<div class="t " style="left:713px;top:306px;"><span class="n" style="margin-right:0.83px">0</span></div>
<div class="t " style="left:792.5px;top:306px;">main</div>
<div class="a" style="left:-1px;top:322px;width:800px;height:1px;background:#dcdee1;"></div>
<div class="cb" style="left:6px;top:326px"></div>
<div class="a" style="left:25px;top:323px;width:1px;height:20px;background:#dcdee1;"></div>
<div class="a" style="left:117px;top:323px;width:1px;height:20px;background:#dcdee1;"></div>
<div class="a" style="left:354px;top:323px;width:1px;height:20px;background:#dcdee1;"></div>
<div class="a" style="left:706px;top:323px;width:1px;height:20px;background:#dcdee1;"></div>
<div class="a" style="left:786px;top:323px;width:1px;height:20px;background:#dcdee1;"></div>
<div class="pill " style="left:32px;top:326px">DACH</div>
<svg style="left:124px;top:329px" width="13" height="11" viewBox="0 0 13 11"><path d="M1.8 1.8 H8.9 L11.1 3.5 L8.9 5.2 H1.8 Z" fill="none" stroke="#17895a" stroke-width="1.7" stroke-linecap="round" stroke-linejoin="round"/><path d="M6 5.6 V9.2" fill="none" stroke="#17895a" stroke-width="1.8" stroke-linecap="round" stroke-linejoin="round"/></svg>
<div class="t " style="left:139.5px;top:327px;"><span class="n" style="margin-right:10.01px">10.10.201.0/24</span></div>
<div class="t " style="left:361.5px;top:327px;">iptv<span class="h">-</span>lan</div>
<div class="t " style="left:713px;top:327px;"><span class="n" style="margin-right:0.83px">0</span></div>
<div class="t " style="left:792.5px;top:327px;">main</div>
<div class="a" style="left:-1px;top:343px;width:800px;height:1px;background:#dcdee1;"></div>
<div class="cb" style="left:6px;top:347px"></div>
<div class="a" style="left:25px;top:344px;width:1px;height:20px;background:#dcdee1;"></div>
<div class="a" style="left:117px;top:344px;width:1px;height:20px;background:#dcdee1;"></div>
<div class="a" style="left:354px;top:344px;width:1px;height:20px;background:#dcdee1;"></div>
<div class="a" style="left:706px;top:344px;width:1px;height:20px;background:#dcdee1;"></div>
<div class="a" style="left:786px;top:344px;width:1px;height:20px;background:#dcdee1;"></div>
<div class="pill " style="left:32px;top:347px">DAC</div>
<svg style="left:124px;top:350px" width="13" height="11" viewBox="0 0 13 11"><path d="M1.8 1.8 H8.9 L11.1 3.5 L8.9 5.2 H1.8 Z" fill="none" stroke="#17895a" stroke-width="1.7" stroke-linecap="round" stroke-linejoin="round"/><path d="M6 5.6 V9.2" fill="none" stroke="#17895a" stroke-width="1.8" stroke-linecap="round" stroke-linejoin="round"/></svg>
<div class="t " style="left:139.5px;top:348px;"><span class="n" style="margin-right:10.01px">10.25.128.0/18</span></div>
<div class="t " style="left:361.5px;top:348px;">movistar_voip</div>
<div class="t " style="left:713px;top:348px;"><span class="n" style="margin-right:0.83px">0</span></div>
<div class="t " style="left:792.5px;top:348px;">main</div>
<div class="a" style="left:-1px;top:364px;width:800px;height:1px;background:#dcdee1;"></div>
<div class="cb" style="left:6px;top:368px"></div>
<div class="a" style="left:25px;top:365px;width:1px;height:20px;background:#dcdee1;"></div>
<div class="a" style="left:117px;top:365px;width:1px;height:20px;background:#dcdee1;"></div>
<div class="a" style="left:354px;top:365px;width:1px;height:20px;background:#dcdee1;"></div>
<div class="a" style="left:706px;top:365px;width:1px;height:20px;background:#dcdee1;"></div>
<div class="a" style="left:786px;top:365px;width:1px;height:20px;background:#dcdee1;"></div>
<div class="pill " style="left:32px;top:368px">DAr</div>
<svg style="left:124px;top:371px" width="13" height="11" viewBox="0 0 13 11"><path d="M1.8 1.8 H8.9 L11.1 3.5 L8.9 5.2 H1.8 Z" fill="none" stroke="#17895a" stroke-width="1.7" stroke-linecap="round" stroke-linejoin="round"/><path d="M6 5.6 V9.2" fill="none" stroke="#17895a" stroke-width="1.8" stroke-linecap="round" stroke-linejoin="round"/></svg>
<div class="t " style="left:139.5px;top:369px;"><span class="n" style="margin-right:11.68px">10.31.255.128/27</span></div>
<div class="t " style="left:361.5px;top:369px;"><span class="n" style="margin-right:7.92px">10.25.128.1</span>%movistar_voip</div>
<div class="t " style="left:713px;top:369px;"><span class="n" style="margin-right:2.50px">120</span></div>
<div class="t " style="left:792.5px;top:369px;">main</div>
<div class="a" style="left:-1px;top:385px;width:800px;height:1px;background:#dcdee1;"></div>
<div class="cb" style="left:6px;top:389px"></div>
<div class="a" style="left:25px;top:386px;width:1px;height:20px;background:#dcdee1;"></div>
<div class="a" style="left:117px;top:386px;width:1px;height:20px;background:#dcdee1;"></div>
<div class="a" style="left:354px;top:386px;width:1px;height:20px;background:#dcdee1;"></div>
<div class="a" style="left:706px;top:386px;width:1px;height:20px;background:#dcdee1;"></div>
<div class="a" style="left:786px;top:386px;width:1px;height:20px;background:#dcdee1;"></div>
<div class="pill " style="left:32px;top:389px">DACH</div>
<svg style="left:124px;top:392px" width="13" height="11" viewBox="0 0 13 11"><path d="M1.8 1.8 H8.9 L11.1 3.5 L8.9 5.2 H1.8 Z" fill="none" stroke="#17895a" stroke-width="1.7" stroke-linecap="round" stroke-linejoin="round"/><path d="M6 5.6 V9.2" fill="none" stroke="#17895a" stroke-width="1.8" stroke-linecap="round" stroke-linejoin="round"/></svg>
<div class="t " style="left:139.5px;top:390px;"><span class="n" style="margin-right:10.84px">10.127.26.60/30</span></div>
<div class="t " style="left:361.5px;top:390px;">mobile_inet</div>
<div class="t " style="left:713px;top:390px;"><span class="n" style="margin-right:0.83px">0</span></div>
<div class="t " style="left:792.5px;top:390px;">main</div>
<div class="a" style="left:-1px;top:406px;width:800px;height:1px;background:#dcdee1;"></div>
<div class="cb" style="left:6px;top:410px"></div>
<div class="a" style="left:25px;top:407px;width:1px;height:20px;background:#dcdee1;"></div>
<div class="a" style="left:117px;top:407px;width:1px;height:20px;background:#dcdee1;"></div>
<div class="a" style="left:354px;top:407px;width:1px;height:20px;background:#dcdee1;"></div>
<div class="a" style="left:706px;top:407px;width:1px;height:20px;background:#dcdee1;"></div>
<div class="a" style="left:786px;top:407px;width:1px;height:20px;background:#dcdee1;"></div>
<div class="pill " style="left:32px;top:410px">DAC</div>
<svg style="left:124px;top:413px" width="13" height="11" viewBox="0 0 13 11"><path d="M1.8 1.8 H8.9 L11.1 3.5 L8.9 5.2 H1.8 Z" fill="none" stroke="#17895a" stroke-width="1.7" stroke-linecap="round" stroke-linejoin="round"/><path d="M6 5.6 V9.2" fill="none" stroke="#17895a" stroke-width="1.8" stroke-linecap="round" stroke-linejoin="round"/></svg>
<div class="t " style="left:139.5px;top:411px;"><span class="n" style="margin-right:8.34px">10.128.0.0/9</span></div>
<div class="t " style="left:361.5px;top:411px;">movistar_iptv</div>
<div class="t " style="left:713px;top:411px;"><span class="n" style="margin-right:0.83px">0</span></div>
<div class="t " style="left:792.5px;top:411px;">main</div>
<div class="a" style="left:-1px;top:427px;width:800px;height:1px;background:#dcdee1;"></div>
<div class="cb" style="left:6px;top:431px"></div>
<div class="a" style="left:25px;top:428px;width:1px;height:20px;background:#dcdee1;"></div>
<div class="a" style="left:117px;top:428px;width:1px;height:20px;background:#dcdee1;"></div>
<div class="a" style="left:354px;top:428px;width:1px;height:20px;background:#dcdee1;"></div>
<div class="a" style="left:706px;top:428px;width:1px;height:20px;background:#dcdee1;"></div>
<div class="a" style="left:786px;top:428px;width:1px;height:20px;background:#dcdee1;"></div>
<div class="pill " style="left:32px;top:431px">DAC</div>
<svg style="left:124px;top:434px" width="13" height="11" viewBox="0 0 13 11"><path d="M1.8 1.8 H8.9 L11.1 3.5 L8.9 5.2 H1.8 Z" fill="none" stroke="#17895a" stroke-width="1.7" stroke-linecap="round" stroke-linejoin="round"/><path d="M6 5.6 V9.2" fill="none" stroke="#17895a" stroke-width="1.8" stroke-linecap="round" stroke-linejoin="round"/></svg>
<div class="t " style="left:139.5px;top:432px;"><span class="n" style="margin-right:9.18px">172.16.0.0/29</span></div>
<div class="t " style="left:361.5px;top:432px;">docker<span class="h">-</span>pihole</div>
<div class="t " style="left:713px;top:432px;"><span class="n" style="margin-right:0.83px">0</span></div>
<div class="t " style="left:792.5px;top:432px;">main</div>
<div class="a" style="left:-1px;top:448px;width:800px;height:1px;background:#dcdee1;"></div>
<div class="cb" style="left:6px;top:452px"></div>
<div class="a" style="left:25px;top:449px;width:1px;height:20px;background:#dcdee1;"></div>
<div class="a" style="left:117px;top:449px;width:1px;height:20px;background:#dcdee1;"></div>
<div class="a" style="left:354px;top:449px;width:1px;height:20px;background:#dcdee1;"></div>
<div class="a" style="left:706px;top:449px;width:1px;height:20px;background:#dcdee1;"></div>
<div class="a" style="left:786px;top:449px;width:1px;height:20px;background:#dcdee1;"></div>
<div class="pill " style="left:32px;top:452px">DAC</div>
<svg style="left:124px;top:455px" width="13" height="11" viewBox="0 0 13 11"><path d="M1.8 1.8 H8.9 L11.1 3.5 L8.9 5.2 H1.8 Z" fill="none" stroke="#17895a" stroke-width="1.7" stroke-linecap="round" stroke-linejoin="round"/><path d="M6 5.6 V9.2" fill="none" stroke="#17895a" stroke-width="1.8" stroke-linecap="round" stroke-linejoin="round"/></svg>
<div class="t " style="left:139.5px;top:453px;"><span class="n" style="margin-right:9.18px">172.16.1.0/29</span></div>
<div class="t " style="left:361.5px;top:453px;">docker<span class="h">-</span>syslog</div>
<div class="t " style="left:713px;top:453px;"><span class="n" style="margin-right:0.83px">0</span></div>
<div class="t " style="left:792.5px;top:453px;">main</div>
<div class="a" style="left:-1px;top:469px;width:800px;height:1px;background:#dcdee1;"></div>
<div class="cb" style="left:6px;top:473px"></div>
<div class="a" style="left:25px;top:470px;width:1px;height:20px;background:#dcdee1;"></div>
<div class="a" style="left:117px;top:470px;width:1px;height:20px;background:#dcdee1;"></div>
<div class="a" style="left:354px;top:470px;width:1px;height:20px;background:#dcdee1;"></div>
<div class="a" style="left:706px;top:470px;width:1px;height:20px;background:#dcdee1;"></div>
<div class="a" style="left:786px;top:470px;width:1px;height:20px;background:#dcdee1;"></div>
<div class="pill " style="left:32px;top:473px">DAr</div>
<svg style="left:124px;top:476px" width="13" height="11" viewBox="0 0 13 11"><path d="M1.8 1.8 H8.9 L11.1 3.5 L8.9 5.2 H1.8 Z" fill="none" stroke="#17895a" stroke-width="1.7" stroke-linecap="round" stroke-linejoin="round"/><path d="M6 5.6 V9.2" fill="none" stroke="#17895a" stroke-width="1.8" stroke-linecap="round" stroke-linejoin="round"/></svg>
<div class="t " style="left:139.5px;top:474px;"><span class="n" style="margin-right:10.01px">172.23.96.0/21</span></div>
<div class="t " style="left:361.5px;top:474px;"><span class="n" style="margin-right:7.09px">10.128.0.1</span>%movistar_iptv</div>
<div class="t " style="left:713px;top:474px;"><span class="n" style="margin-right:2.50px">120</span></div>
<div class="t " style="left:792.5px;top:474px;">main</div>
<div class="a" style="left:-1px;top:490px;width:800px;height:1px;background:#dcdee1;"></div>
<div class="cb" style="left:6px;top:494px"></div>
<div class="a" style="left:25px;top:491px;width:1px;height:20px;background:#dcdee1;"></div>
<div class="a" style="left:117px;top:491px;width:1px;height:20px;background:#dcdee1;"></div>
<div class="a" style="left:354px;top:491px;width:1px;height:20px;background:#dcdee1;"></div>
<div class="a" style="left:706px;top:491px;width:1px;height:20px;background:#dcdee1;"></div>
<div class="a" style="left:786px;top:491px;width:1px;height:20px;background:#dcdee1;"></div>
<div class="pill " style="left:32px;top:494px">DAr</div>
<svg style="left:124px;top:497px" width="13" height="11" viewBox="0 0 13 11"><path d="M1.8 1.8 H8.9 L11.1 3.5 L8.9 5.2 H1.8 Z" fill="none" stroke="#17895a" stroke-width="1.7" stroke-linecap="round" stroke-linejoin="round"/><path d="M6 5.6 V9.2" fill="none" stroke="#17895a" stroke-width="1.8" stroke-linecap="round" stroke-linejoin="round"/></svg>
<div class="t " style="left:139.5px;top:495px;"><span class="n" style="margin-right:10.01px">172.26.22.0/26</span></div>
<div class="t " style="left:361.5px;top:495px;"><span class="n" style="margin-right:7.09px">10.128.0.1</span>%movistar_iptv</div>
<div class="t " style="left:713px;top:495px;"><span class="n" style="margin-right:2.50px">120</span></div>
<div class="t " style="left:792.5px;top:495px;">main</div>
<div class="a" style="left:-1px;top:511px;width:800px;height:1px;background:#dcdee1;"></div>
<div class="cb" style="left:6px;top:515px"></div>
<div class="a" style="left:25px;top:512px;width:1px;height:20px;background:#dcdee1;"></div>
<div class="a" style="left:117px;top:512px;width:1px;height:20px;background:#dcdee1;"></div>
<div class="a" style="left:354px;top:512px;width:1px;height:20px;background:#dcdee1;"></div>
<div class="a" style="left:706px;top:512px;width:1px;height:20px;background:#dcdee1;"></div>
<div class="a" style="left:786px;top:512px;width:1px;height:20px;background:#dcdee1;"></div>
<div class="pill " style="left:32px;top:515px">DAr</div>
<svg style="left:124px;top:518px" width="13" height="11" viewBox="0 0 13 11"><path d="M1.8 1.8 H8.9 L11.1 3.5 L8.9 5.2 H1.8 Z" fill="none" stroke="#17895a" stroke-width="1.7" stroke-linecap="round" stroke-linejoin="round"/><path d="M6 5.6 V9.2" fill="none" stroke="#17895a" stroke-width="1.8" stroke-linecap="round" stroke-linejoin="round"/></svg>
<div class="t " style="left:139.5px;top:516px;"><span class="n" style="margin-right:10.01px">172.26.23.0/27</span></div>
<div class="t " style="left:361.5px;top:516px;"><span class="n" style="margin-right:7.09px">10.128.0.1</span>%movistar_iptv</div>
<div class="t " style="left:713px;top:516px;"><span class="n" style="margin-right:2.50px">120</span></div>
<div class="t " style="left:792.5px;top:516px;">main</div>
<div class="a" style="left:-1px;top:532px;width:800px;height:1px;background:#dcdee1;"></div>
<div class="cb" style="left:6px;top:536px"></div>
<div class="a" style="left:25px;top:533px;width:1px;height:20px;background:#dcdee1;"></div>
<div class="a" style="left:117px;top:533px;width:1px;height:20px;background:#dcdee1;"></div>
<div class="a" style="left:354px;top:533px;width:1px;height:20px;background:#dcdee1;"></div>
<div class="a" style="left:706px;top:533px;width:1px;height:20px;background:#dcdee1;"></div>
<div class="a" style="left:786px;top:533px;width:1px;height:20px;background:#dcdee1;"></div>
<div class="pill " style="left:32px;top:536px">DAr</div>
<svg style="left:124px;top:539px" width="13" height="11" viewBox="0 0 13 11"><path d="M1.8 1.8 H8.9 L11.1 3.5 L8.9 5.2 H1.8 Z" fill="none" stroke="#17895a" stroke-width="1.7" stroke-linecap="round" stroke-linejoin="round"/><path d="M6 5.6 V9.2" fill="none" stroke="#17895a" stroke-width="1.8" stroke-linecap="round" stroke-linejoin="round"/></svg>
<div class="t " style="left:139.5px;top:537px;"><span class="n" style="margin-right:10.01px">172.26.80.0/21</span></div>
<div class="t " style="left:361.5px;top:537px;"><span class="n" style="margin-right:7.09px">10.128.0.1</span>%movistar_iptv</div>
<div class="t " style="left:713px;top:537px;"><span class="n" style="margin-right:2.50px">120</span></div>
<div class="t " style="left:792.5px;top:537px;">main</div>
<div class="a" style="left:-1px;top:553px;width:800px;height:1px;background:#dcdee1;"></div>
<div class="cb" style="left:6px;top:557px"></div>
<div class="a" style="left:25px;top:554px;width:1px;height:20px;background:#dcdee1;"></div>
<div class="a" style="left:117px;top:554px;width:1px;height:20px;background:#dcdee1;"></div>
<div class="a" style="left:354px;top:554px;width:1px;height:20px;background:#dcdee1;"></div>
<div class="a" style="left:706px;top:554px;width:1px;height:20px;background:#dcdee1;"></div>
<div class="a" style="left:786px;top:554px;width:1px;height:20px;background:#dcdee1;"></div>
<div class="pill " style="left:32px;top:557px">ASH</div>
<svg style="left:124px;top:560px" width="13" height="11" viewBox="0 0 13 11"><path d="M1.8 1.8 H8.9 L11.1 3.5 L8.9 5.2 H1.8 Z" fill="none" stroke="#17895a" stroke-width="1.7" stroke-linecap="round" stroke-linejoin="round"/><path d="M6 5.6 V9.2" fill="none" stroke="#17895a" stroke-width="1.8" stroke-linecap="round" stroke-linejoin="round"/></svg>
<div class="t " style="left:139.5px;top:558px;"><span class="n" style="margin-right:10.01px">192.168.1.0/24</span></div>
<div class="t " style="left:361.5px;top:558px;">mobile_inet</div>
<div class="t " style="left:713px;top:558px;"><span class="n" style="margin-right:0.83px">1</span></div>
<div class="t " style="left:792.5px;top:558px;">main</div>
<div class="a" style="left:-1px;top:574px;width:800px;height:1px;background:#dcdee1;"></div>
<div class="cb" style="left:6px;top:578px"></div>
<div class="a" style="left:25px;top:575px;width:1px;height:20px;background:#dcdee1;"></div>
<div class="a" style="left:117px;top:575px;width:1px;height:20px;background:#dcdee1;"></div>
<div class="a" style="left:354px;top:575px;width:1px;height:20px;background:#dcdee1;"></div>
<div class="a" style="left:706px;top:575px;width:1px;height:20px;background:#dcdee1;"></div>
<div class="a" style="left:786px;top:575px;width:1px;height:20px;background:#dcdee1;"></div>
<div class="pill " style="left:32px;top:578px">DUCI</div>
<svg style="left:124px;top:581px" width="13" height="11" viewBox="0 0 13 11"><path d="M1.8 1.8 H8.9 L11.1 3.5 L8.9 5.2 H1.8 Z" fill="none" stroke="#17895a" stroke-width="1.7" stroke-linecap="round" stroke-linejoin="round"/><path d="M6 5.6 V9.2" fill="none" stroke="#17895a" stroke-width="1.8" stroke-linecap="round" stroke-linejoin="round"/></svg>
<div class="t " style="left:139.5px;top:579px;"><span class="n" style="margin-right:10.84px">192.168.20.0/29</span></div>
<div class="t " style="left:361.5px;top:579px;">mon_wireshark</div>
<div class="t " style="left:713px;top:579px;"><span class="n" style="margin-right:0.83px">0</span></div>
<div class="t " style="left:792.5px;top:579px;">main</div>
<div class="a" style="left:-1px;top:595px;width:800px;height:1px;background:#dcdee1;"></div>
<div class="cb" style="left:6px;top:599px"></div>
<div class="a" style="left:25px;top:596px;width:1px;height:20px;background:#dcdee1;"></div>
<div class="a" style="left:117px;top:596px;width:1px;height:20px;background:#dcdee1;"></div>
<div class="a" style="left:354px;top:596px;width:1px;height:20px;background:#dcdee1;"></div>
<div class="a" style="left:706px;top:596px;width:1px;height:20px;background:#dcdee1;"></div>
<div class="a" style="left:786px;top:596px;width:1px;height:20px;background:#dcdee1;"></div>
<div class="pill " style="left:32px;top:599px">DACH</div>
<svg style="left:124px;top:602px" width="13" height="11" viewBox="0 0 13 11"><path d="M1.8 1.8 H8.9 L11.1 3.5 L8.9 5.2 H1.8 Z" fill="none" stroke="#17895a" stroke-width="1.7" stroke-linecap="round" stroke-linejoin="round"/><path d="M6 5.6 V9.2" fill="none" stroke="#17895a" stroke-width="1.8" stroke-linecap="round" stroke-linejoin="round"/></svg>
<div class="t " style="left:139.5px;top:600px;"><span class="n" style="margin-right:10.84px">192.168.30.0/24</span></div>
<div class="t " style="left:361.5px;top:600px;">lan_guest</div>
<div class="t " style="left:713px;top:600px;"><span class="n" style="margin-right:0.83px">0</span></div>
<div class="t " style="left:792.5px;top:600px;">main</div>
<div class="a" style="left:-1px;top:616px;width:800px;height:1px;background:#dcdee1;"></div>
</div>
<svg style="left:1428px;top:618px" width="20" height="24" viewBox="0 0 20 24"><path d="M3.6 4.2 L3.4 21.4 Q3.4 23 4.8 22.2 L8.8 19.2 Q9.6 18.6 10.6 18.5 L16 17.6 Q17.6 17.2 16.4 16 Z" fill="none" stroke="rgba(0,0,0,.22)" stroke-width="3.6" stroke-linejoin="round"/><path d="M3.6 4.2 L3.4 21.4 Q3.4 23 4.8 22.2 L8.8 19.2 Q9.6 18.6 10.6 18.5 L16 17.6 Q17.6 17.2 16.4 16 Z" fill="#fff" stroke="#fff" stroke-width="2.6" stroke-linejoin="round"/><path d="M3.6 4.2 L3.4 21.4 Q3.4 23 4.8 22.2 L8.8 19.2 Q9.6 18.6 10.6 18.5 L16 17.6 Q17.6 17.2 16.4 16 Z" fill="#000" stroke="#000" stroke-width=".7" stroke-linejoin="round"/></svg>
</body></html>
